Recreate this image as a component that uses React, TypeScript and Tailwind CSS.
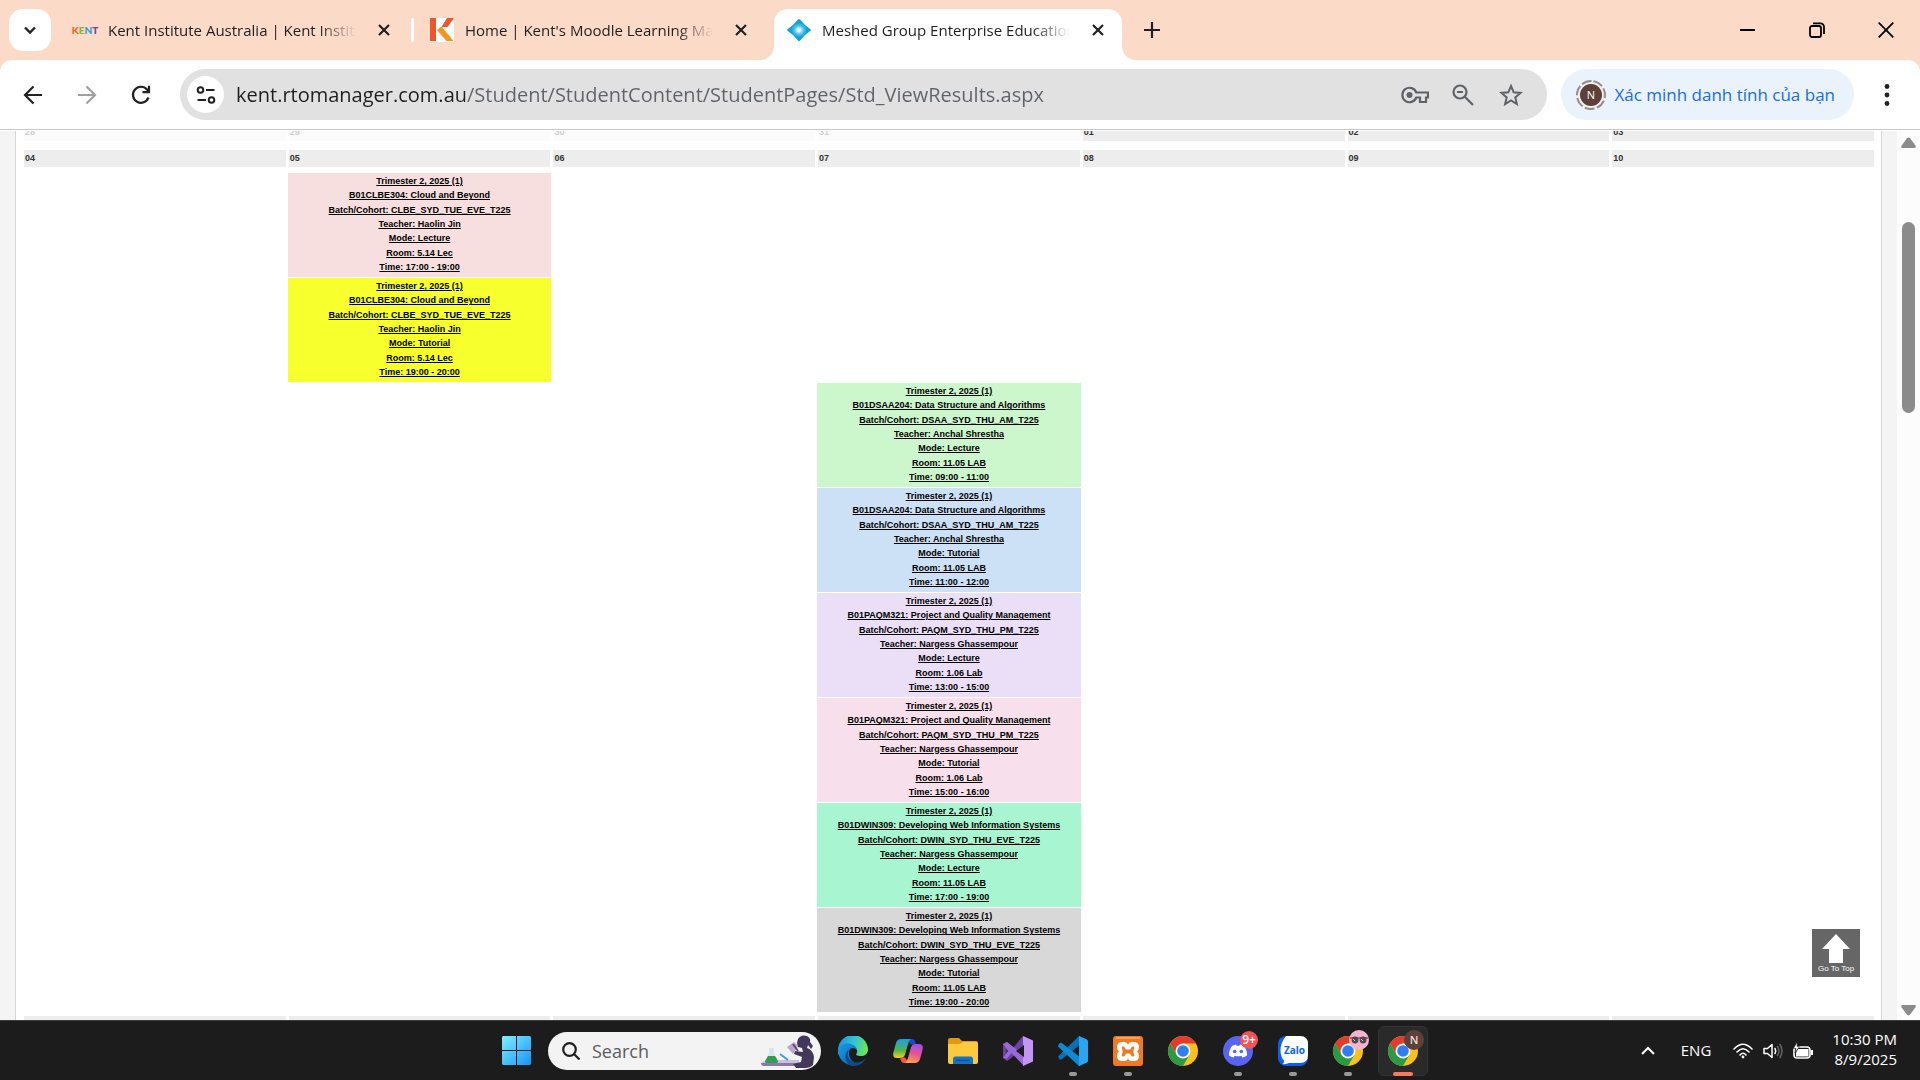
import type { ReactNode } from "react";

const UI_FONT = "font-['Open_Sans','Noto_Sans',sans-serif]";

/* ---------- favicons and toolbar icons ---------- */

function KentFavicon() {
  return (
    <span aria-hidden="true" className="flex w-[26px] justify-center font-['Lato',sans-serif] text-[10px] leading-3 font-black">
      <span className="text-[#f0602c]">K</span>
      <span className="text-[#7cb83c]">E</span>
      <span className="text-[#2a9fd8]">N</span>
      <span className="text-[#7d3f98]">T</span>
    </span>
  );
}

function MoodleFavicon() {
  return (
    <svg viewBox="0 0 24 24" className="size-6" aria-hidden="true">
      <rect width="24" height="24" fill="#fff" />
      <rect width="6" height="23" fill="#f1552b" />
      <path d="M17 0h7l-6.500 9h-6z" fill="#f1552b" />
      <path d="M11.500 8.500 23.500 23h-7L7 12z" fill="#f7941d" />
    </svg>
  );
}

function MeshedFavicon() {
  return (
    <svg viewBox="0 0 24 24" className="size-6" aria-hidden="true">
      <defs>
        <radialGradient id="mesh">
          <stop offset="0.08" stopColor="#fff" />
          <stop offset="0.35" stopColor="#62c8ec" />
          <stop offset="0.65" stopColor="#0ba3dc" />
        </radialGradient>
      </defs>
      <path d="M11 1.500q1-1 2 0l4.500 5 .8.700 5.200 4q.8.800 0 1.600l-5.200 4-.8.700-4.500 5q-1 1-2 0l-4.500-5-.8-.700-5.200-4q-.8-.8 0-1.600l5.200-4 .8-.700z" fill="url(#mesh)" />
    </svg>
  );
}

function CloseIcon() {
  return (
    <svg viewBox="0 0 12 12" className="size-3" fill="none" stroke="#202124" strokeWidth="2.200" aria-hidden="true">
      <path d="M1 1l10 10M11 1 1 11" />
    </svg>
  );
}

function Tab({ icon, title, active }: { icon: ReactNode; title: string; active?: boolean }) {
  return (
    <div className={active ? "flex h-[51px] w-[348px] items-center self-end rounded-t-[14px] bg-white pr-2 pb-[9px] pl-3" : "flex h-[51px] w-[348px] items-center self-end pr-2 pb-[9px] pl-3"}>
      <span className="flex w-[26px] shrink-0 justify-center">{icon}</span>
      <button type="button" className="ml-2.5 h-6 min-w-0 flex-1 overflow-hidden text-left text-[15px] leading-6 whitespace-nowrap text-[#1f1f1f] [mask-image:linear-gradient(to_right,#000_85%,transparent)]">
        {title}
      </button>
      <button type="button" aria-label={"Close " + title} className="ml-3 flex size-8 shrink-0 items-center justify-center">
        <CloseIcon />
      </button>
    </div>
  );
}

function Flare({ side }: { side: "left" | "right" }) {
  return (
    <svg viewBox="0 0 14 14" className="size-3.5 shrink-0 self-end" fill="#fff" aria-hidden="true">
      <path d={side === "left" ? "M14 0v14H0A14 14 0 0 0 14 0z" : "M0 0v14h14A14 14 0 0 1 0 0z"} />
    </svg>
  );
}

function TabStrip() {
  return (
    <header className="flex h-[60px] shrink-0 items-center bg-[#fcdac8]">
      <button type="button" aria-label="Search tabs" className="ml-[9px] flex size-[42px] shrink-0 items-center justify-center rounded-[14px] bg-white">
        <svg viewBox="0 0 12 8" className="h-2 w-3" fill="none" stroke="#202124" strokeWidth="2.400" aria-hidden="true">
          <path d="M1 1.500l5 5 5-5" />
        </svg>
      </button>
      <div className="ml-[9px] flex h-full min-w-0 items-center">
        <Tab icon={<KentFavicon />} title="Kent Institute Australia | Kent Institute" />
        <span className="mx-[3px] h-6 w-[3px] rounded-full bg-white" />
        <Tab icon={<MoodleFavicon />} title="Home | Kent's Moodle Learning Management" />
        <span className="-ml-[5px] flex h-full items-center">
          <Flare side="left" />
          <Tab active icon={<MeshedFavicon />} title="Meshed Group Enterprise Education" />
          <Flare side="right" />
        </span>
        <button type="button" aria-label="New tab" className="ml-0.5 flex size-7 items-center justify-center">
          <svg viewBox="0 0 16 16" className="size-4" stroke="#202124" strokeWidth="2.200" aria-hidden="true">
            <path d="M8 0v16M0 8h16" />
          </svg>
        </button>
      </div>
      <div className="ml-auto flex h-full items-center">
        <button type="button" aria-label="Minimize" className="flex h-full w-[69px] items-center justify-center">
          <svg viewBox="0 0 16 16" className="size-4" stroke="#000" strokeWidth="2" aria-hidden="true"><path d="M0 8h15" /></svg>
        </button>
        <button type="button" aria-label="Restore" className="flex h-full w-[69px] items-center justify-center">
          <svg viewBox="0 0 16 16" className="size-4" fill="none" stroke="#000" strokeWidth="1.800" aria-hidden="true">
            <rect x="1" y="4" width="11" height="11" rx="2" />
            <path d="M4 1.300h7.500a3.500 3.500 0 0 1 3.500 3.500V12" />
          </svg>
        </button>
        <button type="button" aria-label="Close" className="flex h-full w-[69px] items-center justify-center">
          <svg viewBox="0 0 16 16" className="size-4" stroke="#000" strokeWidth="1.800" aria-hidden="true"><path d="M.7.7l14.600 14.600M15.300.7.7 15.300" /></svg>
        </button>
      </div>
    </header>
  );
}

function Toolbar() {
  return (
    <div className="shrink-0 bg-[#fcdac8]">
      <nav className="flex h-[70px] items-center rounded-t-xl border-b border-[#c8c8c8] bg-white">
        <button type="button" aria-label="Back" className="ml-3 flex size-[42px] items-center justify-center">
          <svg viewBox="0 0 20 20" className="size-5" fill="none" stroke="#202124" strokeWidth="2.200" aria-hidden="true"><path d="M19 10H2.500M10.500 1.500 2 10l8.500 8.500" /></svg>
        </button>
        <button type="button" aria-label="Forward" className="ml-3 flex size-[42px] items-center justify-center">
          <svg viewBox="0 0 20 20" className="size-5" fill="none" stroke="#a0a0a0" strokeWidth="2.200" aria-hidden="true"><path d="M1 10h16.500M9.500 1.500 18 10l-8.500 8.500" /></svg>
        </button>
        <button type="button" aria-label="Reload" className="ml-3 flex size-[42px] items-center justify-center">
          <svg viewBox="0 0 20 20" className="size-5" fill="none" stroke="#202124" strokeWidth="2.200" aria-hidden="true">
            <path d="M17.500 12.500A8 8 0 1 1 16 4.500l2 2.200M18 .8v6.400h-6.500" />
          </svg>
        </button>
        <div className="ml-[18px] flex h-[51px] min-w-0 flex-1 items-center rounded-full bg-[#e1e1e1] pr-3">
          <button type="button" aria-label="View site information" className="ml-[7px] flex size-[37px] shrink-0 items-center justify-center rounded-full bg-white">
            <svg viewBox="0 0 20 20" className="size-5" fill="none" stroke="#202124" strokeWidth="2" aria-hidden="true">
              <circle cx="4.500" cy="5" r="2.800" /><path d="M10 5h8.500M1.500 15H10" /><circle cx="15.500" cy="15" r="2.800" />
            </svg>
          </button>
          <input
            type="text"
            aria-label="Address"
            defaultValue="kent.rtomanager.com.au/Student/StudentContent/StudentPages/Std_ViewResults.aspx"
            className="ml-3 h-8 min-w-0 flex-1 bg-[linear-gradient(to_right,#1f1f1f_229px,#5f6368_229px)] bg-clip-text text-xl text-transparent outline-none"
          />
          <button type="button" aria-label="Manage passwords" className="flex h-8 w-12 items-center justify-center">
            <svg viewBox="0 0 28 18" className="h-[18px] w-7" fill="none" stroke="#5f6368" strokeWidth="2.200" aria-hidden="true">
              <path d="M15.300 6.500A7.200 7.200 0 1 0 15.300 11.500H19V16h6v-4.500h2v-5z" /><circle cx="8.500" cy="9" r="3" fill="#5f6368" stroke="none" />
            </svg>
          </button>
          <button type="button" aria-label="Zoom" className="flex h-8 w-12 items-center justify-center">
            <svg viewBox="0 0 22 22" className="size-[22px]" fill="none" stroke="#5f6368" strokeWidth="2.200" aria-hidden="true">
              <circle cx="8" cy="8" r="6.500" /><path d="M12.800 12.800 21 21M5 8h6" />
            </svg>
          </button>
          <button type="button" aria-label="Bookmark this tab" className="flex h-8 w-12 items-center justify-center">
            <svg viewBox="0 0 24 24" className="size-6" fill="none" stroke="#5f6368" strokeWidth="2" aria-hidden="true">
              <path d="M12 3l2.700 6.300 6.800.6-5.200 4.500 1.600 6.700L12 17.500l-5.900 3.600 1.600-6.700L2.500 9.900l6.800-.6z" />
            </svg>
          </button>
        </div>
        <button type="button" className="ml-3.5 flex h-[51px] shrink-0 items-center gap-[7px] rounded-full bg-[#eaf2fb] pr-[19px] pl-3.5 text-[17px] whitespace-nowrap text-[#1a6dde]">
          <svg viewBox="0 0 32 32" className="size-8" aria-hidden="true">
            <circle cx="16" cy="16" r="14" fill="none" stroke="#a1887f" strokeWidth="2" strokeDasharray="10 2.570" transform="rotate(-80 16 16)" />
            <circle cx="16" cy="16" r="11" fill="#5d4037" />
            <text x="16" y="20" textAnchor="middle" fontSize="11" fill="#fff" fontFamily="Open Sans">N</text>
          </svg>
          Xác minh danh tính của bạn
        </button>
        <button type="button" aria-label="Menu" className="mr-[18px] ml-[18px] flex h-8 w-[30px] items-center justify-center">
          <svg viewBox="0 0 6 22" className="h-[22px] w-1.5" fill="#202124" aria-hidden="true"><circle cx="3" cy="2.500" r="2.400" /><circle cx="3" cy="11" r="2.400" /><circle cx="3" cy="19.500" r="2.400" /></svg>
        </button>
      </nav>
    </div>
  );
}

/* ---------- timetable ---------- */

type Session = { day: number; color: string; lines: string[] };

function session(day: number, color: string, unit: string, batch: string, teacher: string, mode: string, room: string, time: string): Session {
  return { day, color, lines: ["Trimester 2, 2025 (1)", unit, "Batch/Cohort: " + batch, "Teacher: " + teacher, "Mode: " + mode, "Room: " + room, "Time: " + time] };
}

const CLOUD = "B01CLBE304: Cloud and Beyond";
const DATA = "B01DSAA204: Data Structure and Algorithms";
const QUALITY = "B01PAQM321: Project and Quality Management";
const WEB = "B01DWIN309: Developing Web Information Systems";

const SESSIONS: Session[] = [
  session(1, "bg-[#f7dfdf]", CLOUD, "CLBE_SYD_TUE_EVE_T225", "Haolin Jin", "Lecture", "5.14 Lec", "17:00 - 19:00"),
  session(1, "bg-[#f7ff2d]", CLOUD, "CLBE_SYD_TUE_EVE_T225", "Haolin Jin", "Tutorial", "5.14 Lec", "19:00 - 20:00"),
  session(3, "bg-[#ccf6cc]", DATA, "DSAA_SYD_THU_AM_T225", "Anchal Shrestha", "Lecture", "11.05 LAB", "09:00 - 11:00"),
  session(3, "bg-[#cce1f6]", DATA, "DSAA_SYD_THU_AM_T225", "Anchal Shrestha", "Tutorial", "11.05 LAB", "11:00 - 12:00"),
  session(3, "bg-[#ebdff7]", QUALITY, "PAQM_SYD_THU_PM_T225", "Nargess Ghassempour", "Lecture", "1.06 Lab", "13:00 - 15:00"),
  session(3, "bg-[#f7dfeb]", QUALITY, "PAQM_SYD_THU_PM_T225", "Nargess Ghassempour", "Tutorial", "1.06 Lab", "15:00 - 16:00"),
  session(3, "bg-[#a8f6d1]", WEB, "DWIN_SYD_THU_EVE_T225", "Nargess Ghassempour", "Lecture", "11.05 LAB", "17:00 - 19:00"),
  session(3, "bg-[#d8d8d8]", WEB, "DWIN_SYD_THU_EVE_T225", "Nargess Ghassempour", "Tutorial", "11.05 LAB", "19:00 - 20:00"),
];

const DAYS = [0, 1, 2, 3, 4, 5, 6];

function DayRow({ days, muted = 0 }: { days: string[]; muted?: number }) {
  return (
    <tr>
      {days.map((d, i) => (
        <th
          key={d}
          scope="col"
          className={i < muted ? "h-[17px] bg-[#fbfbfb] p-0 px-px text-left text-[9px] leading-[15px] font-bold text-[#d0d0d0]" : "h-[17px] bg-[#ededed] p-0 px-px text-left text-[9px] leading-[15px] font-bold text-[#333]"}
        >
          {d}
        </th>
      ))}
    </tr>
  );
}

function Spacer({ size }: { size: string }) {
  return (
    <tr aria-hidden="true">
      <td colSpan={7} className={size}></td>
    </tr>
  );
}

function Calendar() {
  return (
    <table className="-mt-[7px] w-full table-fixed border-separate border-spacing-x-[3px] border-spacing-y-0">
      <tbody>
        <DayRow days={["28", "29", "30", "31", "01", "02", "03"]} muted={4} />
        <Spacer size="h-[9px] p-0" />
        <DayRow days={["04", "05", "06", "07", "08", "09", "10"]} />
        <Spacer size="h-1.5 p-0" />
        {SESSIONS.map((s, row) => (
          <tr key={row}>
            {DAYS.map((day) => (
              <td key={day} className="h-[105px] p-0 align-top">
                {day === s.day && (
                  <a href="#session" className={"-mx-px flex h-[104px] flex-col items-center justify-between pt-px pb-[3px] text-[9px] leading-[14px] font-bold whitespace-nowrap text-black underline " + s.color}>
                    {s.lines.map((line) => (
                      <span key={line}>{line}</span>
                    ))}
                  </a>
                )}
              </td>
            ))}
          </tr>
        ))}
        <Spacer size="h-[3px] p-0" />
        <DayRow days={["11", "12", "13", "14", "15", "16", "17"]} />
      </tbody>
    </table>
  );
}

function PageView() {
  return (
    <main className="relative flex min-h-0 flex-1 overflow-hidden bg-white pt-px font-['Liberation_Sans',Arial,sans-serif]">
      <div className="w-[15px] shrink-0 bg-[#f4f4f4]" />
      <div className="min-w-0 flex-1 overflow-hidden border-x border-[#d6d6d6] pr-1 pl-[5px]">
        <Calendar />
      </div>
      <div className="w-[15px] shrink-0 bg-[#f4f4f4]" />
      <div className="flex w-[23px] shrink-0 flex-col items-center bg-[#fcfcfc] pt-1.5 pb-1">
        <svg viewBox="0 0 15 11" className="h-[11px] w-[15px]" fill="#8b8b8b" aria-hidden="true"><path d="M6 1.200q1.500-1.600 3 0l5.500 7.500q1 2.300-1 2.300h-12q-2 0-1-2.300z" /></svg>
        <div className="mt-[74px] h-[191px] w-[13px] rounded-full bg-[#8b8b8b]" />
        <svg viewBox="0 0 15 11" className="mt-auto h-[11px] w-[15px] rotate-180" fill="#8b8b8b" aria-hidden="true"><path d="M6 1.200q1.500-1.600 3 0l5.500 7.500q1 2.300-1 2.300h-12q-2 0-1-2.300z" /></svg>
      </div>
      <a href="#top" className="absolute right-[60px] bottom-[43px] flex size-12 flex-col items-center bg-[#666] pt-[5px] text-[8px] leading-[10px] whitespace-nowrap text-white">
        <svg viewBox="0 0 28 30" className="h-[30px] w-7" fill="#fff" aria-hidden="true"><path d="M14 0 28 15h-7v14H7V15H0z" /></svg>
        Go To Top
      </a>
    </main>
  );
}

/* ---------- taskbar ---------- */

function ScientistArt() {
  return (
    <svg viewBox="0 0 56 34" className="h-[34px] w-14" aria-hidden="true">
      <path d="M1 29q4-3 12-3h26v4H3z" fill="#cdbfe0" />
      <path d="M1 29h38v3H4q-3 0-3-3z" fill="#8a78ad" />
      <path d="M9 14h5v5l4 8q.5 2-1.500 2h-10Q4.500 29 5 27l4-8z" fill="#d5e8ef" />
      <path d="M8 22h7l3 5q.5 2-1.500 2h-10Q4.500 29 5 27z" fill="#2f9e4f" />
      <path d="M20 20l8 6" stroke="#3aa0e8" strokeWidth="2" />
      <path d="M27 13l7-5 4 4-5 8z" fill="#b9a6cc" />
      <path d="M33 10l5 7" stroke="#5d4d7d" strokeWidth="2" />
      <path d="M38 5q3-5 9-3 4 2 3 6l3 4-2 3-3-4-1 3q6 2 7 9l-1 8q-3 3-8 3H36l-3-4 8-2 1-5-8-3 1-3 8 1q-1-4-1-4l-4-1-1-4z" fill="#43385b" />
    </svg>
  );
}

function EdgeIcon() {
  return (
    <svg viewBox="0 0 30 30" className="size-[30px]" aria-hidden="true">
      <defs>
        <linearGradient id="edgeTop" x1="0" y1="0.300" x2="1" y2="0.500">
          <stop offset="0" stopColor="#1f8fe0" /><stop offset="0.500" stopColor="#2fc3d8" /><stop offset="1" stopColor="#6be84f" />
        </linearGradient>
        <linearGradient id="edgeLow" x1="0" y1="0" x2="1" y2="1"><stop offset="0" stopColor="#1b9de2" /><stop offset="1" stopColor="#0b5fb0" /></linearGradient>
      </defs>
      <path d="M0 15A15 15 0 0 1 30 13c.3 5-4 7.500-8 7-3 0-4.500-1-3.500-2.500C20.500 14 18 11 14 11 7 11 3 14 0 19z" fill="url(#edgeTop)" />
      <path d="M0 16C0 9 7 6.500 11 7.500c5 1 8 3.500 8 7-1.500-3.500-7-3.500-8 1-1 6 4 12 9 13A15 15 0 0 1 0 16z" fill="url(#edgeLow)" />
      <path d="M12 12.500c-5 5-1 14 6 14 4 0 7-1.500 10-4.500-2 5-7 8-12.500 8C6 29 5 17 12 12.500z" fill="#114a8b" />
    </svg>
  );
}

function CopilotIcon() {
  return (
    <svg viewBox="0 0 30 30" className="size-[30px]" aria-hidden="true">
      <defs>
        <linearGradient id="copA" x1="0" y1="0" x2="0" y2="1"><stop offset="0" stopColor="#1c9bea" /><stop offset="0.600" stopColor="#52b64a" /><stop offset="1" stopColor="#f5cf1b" /></linearGradient>
        <linearGradient id="copB" x1="0.600" y1="0" x2="0.300" y2="1"><stop offset="0" stopColor="#a24de8" /><stop offset="0.500" stopColor="#ea5490" /><stop offset="1" stopColor="#ff9f50" /></linearGradient>
      </defs>
      <path d="M14 3h5q2.500 0 3.300 3L23 8.500h-5z" fill="#1b48d0" />
      <path d="M8 3h10q-2 1-3 5l-2.500 9q-1 5-5 5H4q-5 0-3.500-6L3 7q1.200-4 5-4z" fill="url(#copA)" />
      <path d="M16 27h-5q-2.500 0-3.300-3L7 21.500h5z" fill="#f2593b" />
      <path d="M22 27H12q2-1 3-5l2.500-9q1-5 5-5H26q5 0 3.500 6L27 23q-1.200 4-5 4z" fill="url(#copB)" />
    </svg>
  );
}

function FolderIcon() {
  return (
    <svg viewBox="0 0 30 30" className="size-[30px]" aria-hidden="true">
      <path d="M0 4q0-2 2-2h9l3 3h14q2 0 2 2v8H0z" fill="#dd9b10" />
      <path d="M0 8h12l3-2h13q2 0 2 2v18q0 2-2 2H2q-2 0-2-2z" fill="#fdc93d" />
      <path d="M5 28v-5q0-2.500 2.500-2.500h15Q25 20.500 25 23v5z" fill="#1073c6" />
      <path d="M8.500 24.500h13" stroke="#0a4c92" strokeWidth="1.200" />
    </svg>
  );
}

function VisualStudioIcon() {
  return (
    <svg viewBox="0 0 30 30" className="size-[30px]" aria-hidden="true">
      <path d="M0 8l4-2 5.500 6.500L20 0l1 11L7 23l-3 2-4-3z" fill="#6b44a0" />
      <path d="M3.500 11v8l4-4z" fill="#1c1c1c" />
      <path d="M0 8l4-2L21 19v11L8.500 17 4 22.500l-4-.5 5-7z" fill="#9a68d6" />
      <path d="M20 0l10 4.500v21L20 30V21.500l1-.5V9.500l-1-.5z" fill="#c594f7" />
      <path d="M13 15l8-6v12z" fill="#1c1c1c" />
    </svg>
  );
}

function VsCodeIcon() {
  return (
    <svg viewBox="0 0 30 30" className="size-[30px]" aria-hidden="true">
      <path d="M0 20.500 21 0l2 1v7L3.500 23.500q-1 .6-2-.2z" fill="#0b70b8" />
      <path d="M0 9.500l2-2.500q.8-.6 1.800 0L23 22v7l-2 1L.5 11q-.8-.7-.5-1.500z" fill="#0f8bd6" />
      <path d="M21 0l7.500 3.300Q30 4 30 5.500v19q0 1.500-1.500 2.200L21 30V0z" fill="#29a5f2" />
    </svg>
  );
}

function XamppIcon() {
  return (
    <svg viewBox="0 0 30 30" className="size-[30px]" aria-hidden="true">
      <rect width="30" height="30" rx="3" fill="#f07a22" />
      <path d="M3 2h24" stroke="#fbb27a" strokeWidth="1.500" />
      <path d="M9.500 6h2Q14 6 15 8.500 16 6 18.500 6h2Q26 6 26 11q0 3-2 4.500 2 1.500 2 4.500 0 5-5.500 5h-2Q16 25 15 22.500 14 25 11.500 25h-2Q4 25 4 20q0-3 2-4.500Q4 14 4 11q0-5 5.500-5z" fill="#fff" />
      <path d="M9.500 10.500q2-.5 2.500 1.500.5 1.500 1.500 1.500h3q1 0 1.500-1.500.5-2 2.500-1.500 1.500.8.500 2.500-1.500 2.500 0 5 1 1.800-.5 2.500-2 .5-2.500-1.500-.5-1.500-1.500-1.500h-3q-1 0-1.500 1.500-.5 2-2.500 1.500-1.500-.8-.5-2.500 1.500-2.500 0-5-1-1.800.5-2.500z" fill="#f07a22" />
    </svg>
  );
}

function ChromeIcon({ children }: { children?: ReactNode }) {
  return (
    <svg viewBox="0 0 30 30" className="size-[30px] overflow-visible" aria-hidden="true">
      <circle cx="15" cy="15" r="15" fill="#fbc116" />
      <path d="M2 7.500A15 15 0 0 1 28 7.500H15L8.500 18.700z" fill="#e33b2e" />
      <path d="M2 7.500A15 15 0 0 0 15 30l6.500-11.300H8.500z" fill="#2b9a45" />
      <circle cx="15" cy="15" r="7.500" fill="#fff" />
      <circle cx="15" cy="15" r="5.800" fill="#2f7df0" />
      {children}
    </svg>
  );
}

function PinkAvatar() {
  return (
    <g>
      <circle cx="26" cy="4" r="10" fill="#f4b3cf" />
      <path d="M17 2h18" stroke="#4a4245" strokeWidth="1.200" />
      <circle cx="22" cy="4" r="3.400" fill="#4f484c" />
      <circle cx="30" cy="4" r="3.400" fill="#4f484c" />
      <path d="M20 3l2 2M28 3l2 2" stroke="#cfcfd4" />
    </g>
  );
}

function LetterAvatar() {
  return (
    <g>
      <circle cx="26" cy="4" r="10" fill="#5d4037" />
      <text x="26" y="8" textAnchor="middle" fontSize="11" fontWeight="600" fill="#e8dedb" fontFamily="Open Sans">N</text>
    </g>
  );
}

function DiscordIcon() {
  return (
    <svg viewBox="0 0 30 30" className="size-[30px] overflow-visible" aria-hidden="true">
      <circle cx="15" cy="15" r="15" fill="#5764f0" />
      <path d="M9 10q2.500-1.300 4-1.500l.6 1.200h2.800l.6-1.200q1.500.2 4 1.500 3.300 4.500 3 9.500-2 1.500-4.500 2l-1.200-1.800q-3.300 1-6.600 0L10.500 21.500q-2.500-.5-4.500-2Q5.700 14.500 9 10z" fill="#fff" />
      <circle cx="11.700" cy="15.500" r="1.800" fill="#5764f0" />
      <circle cx="18.300" cy="15.500" r="1.800" fill="#5764f0" />
      <circle cx="26" cy="4" r="9" fill="#f05458" />
      <text x="26" y="8" textAnchor="middle" fontSize="12" fontWeight="600" fill="#fff" fontFamily="Open Sans">9+</text>
    </svg>
  );
}

function ZaloIcon() {
  return (
    <svg viewBox="0 0 30 30" className="size-[30px]" aria-hidden="true">
      <rect width="30" height="30" rx="8" fill="#0a5ff0" />
      <path d="M10 0h12q8 0 8 8v11q0 8-8 8H11q-3 1.500-6.500 1 2-1.500 1.500-3.500Q2.500 21 2.500 14T8 0z" fill="#fff" />
      <text x="16.500" y="18" textAnchor="middle" fontSize="10" fontWeight="700" fill="#0a63e8" fontFamily="Open Sans">Zalo</text>
    </svg>
  );
}

type App = { name: string; icon: ReactNode; state?: "open" | "active" };

const APPS: App[] = [
  { name: "Microsoft Edge", icon: <EdgeIcon /> },
  { name: "Copilot", icon: <CopilotIcon /> },
  { name: "File Explorer", icon: <FolderIcon /> },
  { name: "Visual Studio", icon: <VisualStudioIcon /> },
  { name: "Visual Studio Code", icon: <VsCodeIcon />, state: "open" },
  { name: "XAMPP", icon: <XamppIcon />, state: "open" },
  { name: "Chrome", icon: <ChromeIcon /> },
  { name: "Discord", icon: <DiscordIcon />, state: "open" },
  { name: "Zalo", icon: <ZaloIcon />, state: "open" },
  { name: "Chrome, second profile", icon: <ChromeIcon><PinkAvatar /></ChromeIcon>, state: "open" },
  { name: "Chrome, profile N", icon: <ChromeIcon><LetterAvatar /></ChromeIcon>, state: "active" },
];

function Taskbar() {
  return (
    <footer className="grid h-[60px] shrink-0 grid-cols-[1fr_auto_1fr] items-center border-t border-[#3c3c3c] bg-[#1c1c1c] text-white">
      <div />
      <div className="flex items-center pl-2.5">
        <button type="button" aria-label="Start" className="mr-[17px]">
          <svg viewBox="0 0 29 29" className="size-[29px]" aria-hidden="true">
            <defs>
              <linearGradient id="win" gradientUnits="userSpaceOnUse" x1="0" y1="0" x2="29" y2="29"><stop offset="0" stopColor="#7ff0ff" /><stop offset="1" stopColor="#1494fa" /></linearGradient>
            </defs>
            <path d="M1 0h13v14H0V1zM15 0h13l1 1v13H15zM0 15h14v14H1l-1-1zM15 15h14v13l-1 1H15z" fill="url(#win)" />
          </svg>
        </button>
        <label className="mr-[7px] flex h-[38px] w-[273px] items-center rounded-full bg-[#f3f3f3] pr-[5px] pl-3.5">
          <svg viewBox="0 0 18 18" className="size-[18px] shrink-0" fill="none" stroke="#1f1f1f" strokeWidth="2.200" aria-hidden="true"><circle cx="7.500" cy="7.500" r="6.300" /><path d="M12 12l5.500 5.500" /></svg>
          <input type="text" aria-label="Search" placeholder="Search" className="ml-3 h-7 min-w-0 flex-1 bg-transparent text-lg text-black outline-none placeholder:text-[#5c5c5c]" />
          <ScientistArt />
        </label>
        <div className="flex items-center gap-[5px]">
          {APPS.map((app) => (
            <button
              key={app.name}
              type="button"
              aria-label={app.name}
              className={app.state === "active" ? "relative flex size-[50px] items-center justify-center rounded-md border border-[#333] bg-[#2a2a2a]" : "relative flex size-[50px] items-center justify-center"}
            >
              {app.icon}
              {app.state === "open" && <span className="absolute bottom-0 h-1 w-2 rounded-full bg-[#999]" />}
              {app.state === "active" && <span className="absolute -bottom-px h-1 w-5 rounded-full bg-[#f47c5e]" />}
            </button>
          ))}
        </div>
      </div>
      <div className="flex items-center justify-end pr-[23px]">
        <button type="button" aria-label="Show hidden icons" className="mr-[26px]">
          <svg viewBox="0 0 14 9" className="h-[9px] w-3.5" fill="none" stroke="#fff" strokeWidth="2" aria-hidden="true"><path d="M1 8l6-6 6 6" /></svg>
        </button>
        <button type="button" className="mr-[22px] text-[15px]">ENG</button>
        <button type="button" aria-label="Network, volume and battery" className="mr-[19px] flex items-center gap-2.5">
          <svg viewBox="0 0 20 16" className="h-4 w-5" fill="none" stroke="#fff" strokeWidth="1.600" strokeLinecap="round" aria-hidden="true">
            <path d="M1 6q9-9.500 18 0M4 9q6-6.500 12 0M7 12q3-3.500 6 0" /><circle cx="10" cy="14" r="1.400" fill="#fff" stroke="none" />
          </svg>
          <svg viewBox="0 0 20 16" className="h-4 w-5" fill="none" stroke="#fff" strokeWidth="1.500" strokeLinejoin="round" strokeLinecap="round" aria-hidden="true">
            <path d="M1 5.500h3.500L9 1.500v13L4.500 10.500H1z" /><path d="M12 5.500q1.500 2.500 0 5" /><path d="M14.500 3.500q3 4.500 0 9M17 1.500q4 6.500 0 13" stroke="#666" />
          </svg>
          <svg viewBox="0 0 20 18" className="h-[18px] w-5" aria-hidden="true">
            <rect x="1" y="5" width="16" height="11" rx="3" fill="none" stroke="#fff" strokeWidth="1.600" />
            <path d="M5 7h10.500v7.500H3V11zM18 8h2v5h-2z" fill="#fff" />
            <path d="M4 0 .5 6.500H3L2 11l4.500-6.500H4.200z" fill="#fff" stroke="#1c1c1c" strokeWidth=".6" />
          </svg>
        </button>
        <button type="button" className="pb-1 text-right text-[15px] leading-5">
          <span className="block">10:30 PM</span>
          <span className="block">8/9/2025</span>
        </button>
      </div>
    </footer>
  );
}

export default function App() {
  return (
    <div className={"flex h-screen flex-col overflow-hidden bg-white " + UI_FONT}>
      <TabStrip />
      <Toolbar />
      <PageView />
      <Taskbar />
    </div>
  );
}
